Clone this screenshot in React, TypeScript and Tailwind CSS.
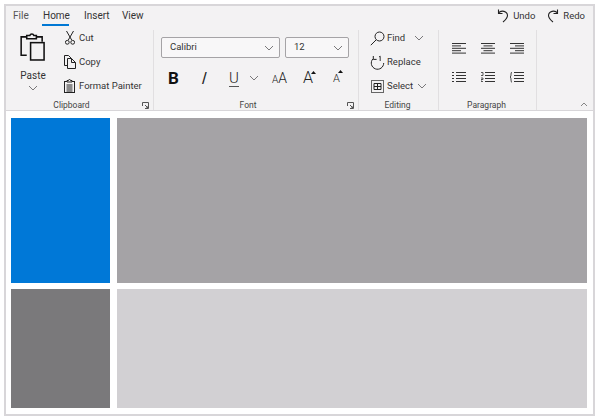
import React from 'react';

const Chevron = ({ className = '' }: { className?: string }) => (
  <svg className={className} width="10" height="6" viewBox="0 0 10 6" fill="none" stroke="#6b6a6c" strokeWidth="0.9">
    <path d="M1 1l4 4 4-4" />
  </svg>
);

const Launcher = () => (
  <svg width="7" height="7" viewBox="0 0 7 7" fill="none" stroke="#555" strokeWidth="1">
    <path d="M.5 4V.5h6v6H3M3 3l3 3M4 6h2V4" />
  </svg>
);

const PasteIcon = () => (
  <svg width="26" height="29" viewBox="0 0 27 30" fill="none" stroke="#111" strokeWidth="1.600">
    <path d="M7 24H1.200V5H7M17 5h6v5" />
    <path d="M7 7V3.500h3.200a2.200 2.200 0 0 1 4.200 0H17V7z" fill="#f3f2f3" />
    <rect x="11" y="11" width="14" height="18" fill="#f3f2f3" />
  </svg>
);

const CutIcon = () => (
  <svg width="10" height="14" viewBox="0 0 10 14" fill="none" stroke="#222" strokeWidth="1">
    <path d="M1.500 0l5.200 9M8.500 0L3.300 9" />
    <circle cx="2.300" cy="11.300" r="1.900" />
    <circle cx="7.700" cy="11.300" r="1.900" />
  </svg>
);

const CopyIcon = () => (
  <svg width="12" height="14" viewBox="0 0 12 14" fill="none" stroke="#222" strokeWidth="1">
    <path d="M3.500 10.500H.5v-10h4l3 3" />
    <path d="M3.500 3.500h4l4 4v6h-8z" fill="#f3f2f3" />
    <path d="M7.500 3.500v4h4" />
  </svg>
);

const PainterIcon = () => (
  <svg width="11" height="14" viewBox="0 0 11 14" fill="none" stroke="#222" strokeWidth="1">
    <rect x="0.5" y="2.500" width="10" height="11" />
    <path d="M3 3V1.500h1.500a1 1 0 0 1 2 0H8V3z" fill="#f3f2f3" />
    <path d="M2.500 6h6M2.500 8h6M2.500 10h6M2.500 12h6" />
  </svg>
);

const FindIcon = () => (
  <svg width="15" height="15" viewBox="0 0 15 15" fill="none" stroke="#222" strokeWidth="1">
    <circle cx="9.500" cy="5.500" r="4.500" />
    <path d="M6.200 8.800L.8 14.200" />
  </svg>
);

const ReplaceIcon = () => (
  <svg width="15" height="15" viewBox="0 0 15 15" fill="none" stroke="#222" strokeWidth="1">
    <path d="M13.700 8a6.200 6.200 0 1 1-10.900-4" />
    <path d="M3.300 1v3.400h3.300" />
    <path d="M9 2l1.200-.8V6" strokeWidth="0.9" />
  </svg>
);

const SelectIcon = () => (
  <svg width="13" height="13" viewBox="0 0 13 13" fill="none" stroke="#222" strokeWidth="1">
    <rect x="0.5" y="0.5" width="12" height="12" stroke="#666" />
    <path d="M3 3.500h7v6H3zM6.500 3.500v6M3 6.500h7" />
  </svg>
);

const UndoIcon = ({ flip = false }: { flip?: boolean }) => (
  <svg className={flip ? '-scale-x-100' : ''} width="12" height="14" viewBox="0 0 12 14" fill="none" stroke="#222" strokeWidth="1.100">
    <path d="M1.500 4a5 4.500 0 0 1 9 2.500c0 2.500-2 4.500-4.500 6.500" />
    <path d="M1.500 .5V4.500H5.500" />
  </svg>
);

// lines of the paragraph buttons, drawn as rows of bars
const AlignIcon = ({ kind }: { kind: 'left' | 'center' | 'right' }) => {
  const rows: [number, number][] =
    kind === 'left'
      ? [[0, 14], [0, 9], [0, 14], [0, 9], [0, 14]]
      : kind === 'center'
        ? [[0, 14], [2.5, 9], [0, 14], [2.5, 9], [0, 14]]
        : [[0, 14], [5, 9], [0, 14], [5, 9], [0, 14]];
  return (
    <svg width="14" height="11" viewBox="0 0 14 11" stroke="#333" strokeWidth="1">
      {rows.map(([x, w], i) => (
        <path key={i} d={`M${x} ${i * 2.4 + 0.5}h${w}`} />
      ))}
    </svg>
  );
};

const ListIcon = ({ kind }: { kind: 'bullet' | 'number' | 'spacing' }) => (
  <svg width="14" height="11" viewBox="0 0 14 11" fill="none" stroke="#333" strokeWidth="1">
    <path d="M4 .5h10M4 3.500h10M4 6.500h10M4 9.500h10" />
    {kind === 'bullet' && <path d="M0 .5h2M0 3.500h2M0 6.500h2M0 9.500h2" />}
    {kind === 'number' && <path d="M0 .5h2v3H0M0 6h2v1.500H0v2h2" strokeWidth="0.8" />}
    {kind === 'spacing' && <path d="M2 0C.5 0 1.500 4 .3 5 1.500 6 .5 10.500 2 10.500" strokeWidth="0.9" />}
  </svg>
);

const GrowIcon = ({ small = false }: { small?: boolean }) => (
  <span className="relative inline-flex items-end font-light">
    <span className={small ? 'text-[11px] leading-none text-[#222]' : 'text-[16px] leading-none text-[#222]'}>A</span>
    <svg className={small ? 'absolute -right-[3px] -top-[3px]' : 'absolute -right-[3px] top-[1px]'} width="5" height="3" viewBox="0 0 5 3">
      <path d="M2.500 0L5 3H0z" fill="#111" />
    </svg>
  </span>
);

const SmallRow = ({ icon, label }: { icon: React.ReactNode; label: string }) => (
  <div className="flex h-[24px] items-center gap-[2px]">
    <span className="flex w-[15px] justify-center">{icon}</span>
    <span className="text-[9.500px] leading-none text-[#333]">{label}</span>
  </div>
);

const Group = ({ label, width, launcher, children }: { label: string; width: string; launcher?: boolean; children: React.ReactNode }) => (
  <div className={`flex h-[80px] flex-col border-r border-[#e1dfe1] ${width}`}>
    <div className="min-h-0 flex-1">{children}</div>
    <div className={`relative flex h-[9px] items-center justify-center text-[8.500px] leading-none text-[#444] ${launcher ? 'pr-[16px]' : 'pr-[2px]'}`}>
      {label}
      {launcher && (
        <span className="absolute right-[4px] top-[1px]">
          <Launcher />
        </span>
      )}
    </div>
  </div>
);

const Combo = ({ value, width }: { value: string; width: string }) => (
  <div className={`flex h-[21px] items-center justify-between rounded-[2px] border border-[#a5a3a6] bg-[#f8f7f8] pl-[8px] pr-[5px] text-[9.500px] text-[#333] ${width}`}>
    {value}
    <Chevron />
  </div>
);

export default function App() {
  return (
    <div className="h-[420px] w-[600px] bg-white p-[4px] font-['Roboto',sans-serif]">
      <div className="flex h-[412px] w-[591px] flex-col border-2 border-[#d8d6d9] bg-white">
        {/* ribbon */}
        <div className="h-[105px] border-b border-[#d8d6d9] bg-[#f3f2f3]">
          <div className="flex h-[24px] items-center justify-between pb-[4px] pr-[8px]">
            <div className="flex pl-[7px] text-[10px] leading-none text-[#333]">
              <span className="w-[30px] text-[#555]">File</span>
              <span className="relative w-[41px]">
                Home
                <span className="absolute -bottom-[5px] -left-[1px] h-[2px] w-[27px] bg-[#0078d4]" />
              </span>
              <span className="w-[38px]">Insert</span>
              <span>View</span>
            </div>
            <div className="flex items-center text-[9.500px] leading-none text-[#333]">
              <UndoIcon />
              <span className="ml-[4px] mr-[12px]">Undo</span>
              <UndoIcon flip />
              <span className="ml-[4px]">Redo</span>
            </div>
          </div>
          <div className="flex">
            <Group label="Clipboard" width="w-[148px]" launcher>
              <div className="flex">
                <div className="flex w-[54px] flex-col items-center pt-[2px]">
                  <PasteIcon />
                  <span className="mt-[10px] text-[10px] leading-none text-[#333]">Paste</span>
                  <Chevron className="mt-[4px]" />
                </div>
                <div className="-mt-[4px] flex flex-col pl-[2px]">
                  <SmallRow icon={<CutIcon />} label="Cut" />
                  <SmallRow icon={<CopyIcon />} label="Copy" />
                  <SmallRow icon={<PainterIcon />} label="Format Painter" />
                </div>
              </div>
            </Group>
            <Group label="Font" width="w-[205px]" launcher>
              <div className="flex flex-col pl-[7px] pt-[7px]">
                <div className="flex gap-[5px]">
                  <Combo value="Calibri" width="w-[119px]" />
                  <Combo value="12" width="w-[64px]" />
                </div>
                <div className="mt-[11px] flex h-[18px] items-center text-[#222]">
                  <span className="w-[37px] pl-[7px] text-[17px] font-bold leading-none text-[#111]">B</span>
                  <span className="w-[31px] pl-[4px] font-['Liberation_Sans',sans-serif] text-[17px] font-light leading-none">/</span>
                  <span className="w-[20px]">
                    <span className="inline-block border-b border-[#555] text-[15px] font-light leading-[15px]">U</span>
                  </span>
                  <Chevron className="mr-[13px]" />
                  <span className="flex w-[31px] items-end font-light leading-none">
                    <span className="text-[10px]">A</span>
                    <span className="text-[14px]">A</span>
                  </span>
                  <span className="w-[30px]">
                    <GrowIcon />
                  </span>
                  <GrowIcon small />
                </div>
              </div>
            </Group>
            <Group label="Editing" width="w-[80px]">
              <div className="-mt-[4px] flex flex-col pl-[11px]">
                <div className="flex items-center">
                  <SmallRow icon={<FindIcon />} label="Find" />
                  <Chevron className="ml-[9px]" />
                </div>
                <SmallRow icon={<ReplaceIcon />} label="Replace" />
                <div className="flex items-center">
                  <SmallRow icon={<SelectIcon />} label="Select" />
                  <Chevron className="ml-[4px]" />
                </div>
              </div>
            </Group>
            <Group label="Paragraph" width="w-[98px]">
              <div className="flex flex-col gap-[18px] pl-[13px] pt-[13px]">
                <div className="flex gap-[15px]">
                  <AlignIcon kind="left" />
                  <AlignIcon kind="center" />
                  <AlignIcon kind="right" />
                </div>
                <div className="flex gap-[15px]">
                  <ListIcon kind="bullet" />
                  <ListIcon kind="number" />
                  <ListIcon kind="spacing" />
                </div>
              </div>
            </Group>
            <div className="flex h-[80px] flex-1 items-end justify-end pb-[3px] pr-[5px]">
              <svg width="8" height="5" viewBox="0 0 8 5" fill="none" stroke="#777" strokeWidth="0.9">
                <path d="M1 4l3-3 3 3" />
              </svg>
            </div>
          </div>
        </div>
        {/* panes */}
        <div className="flex flex-1 flex-col gap-[6px] pb-[6px] pl-[5px] pr-[6px] pt-[7px]">
          <div className="flex h-[165px] gap-[7px]">
            <div className="w-[99px] bg-[#0078d7]" />
            <div className="flex-1 bg-[#a5a3a6]" />
          </div>
          <div className="flex flex-1 gap-[7px]">
            <div className="w-[99px] bg-[#7a797b]" />
            <div className="flex-1 bg-[#d2d0d3]" />
          </div>
        </div>
      </div>
    </div>
  );
}
